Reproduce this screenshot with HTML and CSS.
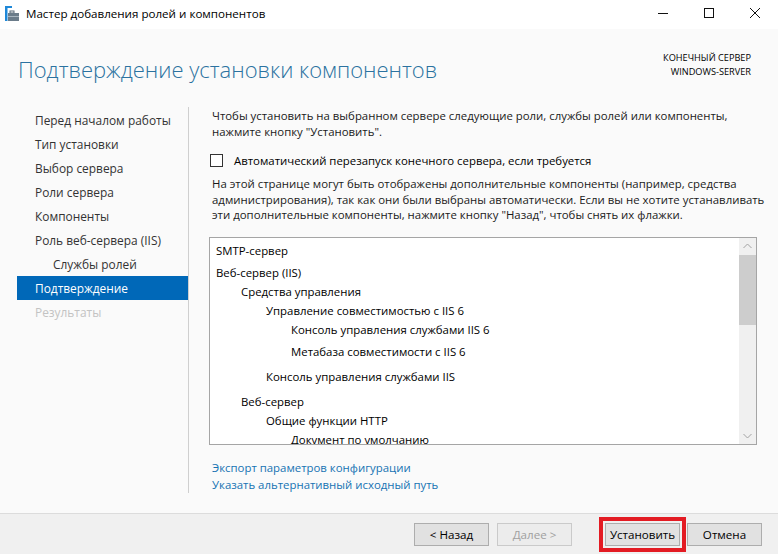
FILE: index.html
```html
<!DOCTYPE html>
<html>
<head>
    <meta charset="UTF-8">
    <title>Мастер добавления ролей и компонентов</title>
    <link rel="stylesheet" href="styles.css">
</head>
<body>
    <!-- Title bar -->
    <div class="titlebar">
        <svg class="app-icon" width="16" height="16" viewBox="0 0 16 16">
            <rect x="0" y="0" width="7" height="2" fill="#1e88d8"/>
            <rect x="0" y="0" width="2.5" height="15" fill="#1e88d8"/>
            <rect x="5" y="5" width="4" height="2" fill="none" stroke="#5a6b78" stroke-width="1"/>
            <rect x="3" y="7" width="11" height="8" fill="#6b7c8a"/>
            <rect x="3" y="10" width="11" height="1" fill="#a9b6c0"/>
        </svg>
        <span class="title-text">Мастер добавления ролей и компонентов</span>
        <div class="controls">
            <span class="ctl">
                <svg width="12" height="12" viewBox="0 0 12 12"><line x1="1" y1="6.5" x2="11" y2="6.5" stroke="#111" stroke-width="1"/></svg>
            </span>
            <span class="ctl">
                <svg width="12" height="12" viewBox="0 0 12 12"><rect x="1.5" y="1.5" width="9" height="9" fill="none" stroke="#111" stroke-width="1"/></svg>
            </span>
            <span class="ctl">
                <svg width="12" height="12" viewBox="0 0 12 12"><path d="M1 1 L11 11 M11 1 L1 11" stroke="#111" stroke-width="1"/></svg>
            </span>
        </div>
    </div>

    <div class="main">
        <div class="header">
            <h1>Подтверждение установки компонентов</h1>
            <div class="server">КОНЕЧНЫЙ СЕРВЕР<br>WINDOWS-SERVER</div>
        </div>

        <div class="wizard">
            <!-- Steps -->
            <ul class="steps">
                <li>Перед началом работы</li>
                <li>Тип установки</li>
                <li>Выбор сервера</li>
                <li>Роли сервера</li>
                <li>Компоненты</li>
                <li>Роль веб-сервера (IIS)</li>
                <li class="sub">Службы ролей</li>
                <li class="active">Подтверждение</li>
                <li class="disabled">Результаты</li>
            </ul>

            <div class="content">
                <p class="intro">Чтобы установить на выбранном сервере следующие роли, службы ролей или компоненты, нажмите кнопку "Установить".</p>

                <label class="check-row">
                    <span class="checkbox"></span>
                    Автоматический перезапуск конечного сервера, если требуется
                </label>

                <p class="note">На этой странице могут быть отображены дополнительные компоненты (например, средства администрирования), так как они были выбраны автоматически. Если вы не хотите устанавливать эти дополнительные компоненты, нажмите кнопку "Назад", чтобы снять их флажки.</p>

                <div class="listbox">
                    <div class="items">
                        <div class="item">SMTP-сервер</div>
                        <div class="item sp1">Веб-сервер (IIS)</div>
                        <div class="item lvl1">Средства управления</div>
                        <div class="item lvl2">Управление совместимостью с IIS 6</div>
                        <div class="item lvl3">Консоль управления службами IIS 6</div>
                        <div class="item lvl3 sp1">Метабаза совместимости с IIS 6</div>
                        <div class="item lvl2 sp2">Консоль управления службами IIS</div>
                        <div class="item lvl1 sp2">Веб-сервер</div>
                        <div class="item lvl2">Общие функции HTTP</div>
                        <div class="item lvl3">Документ по умолчанию</div>
                    </div>
                    <div class="scrollbar">
                        <svg class="arrow" width="17" height="17" viewBox="0 0 17 17"><path d="M4.5 10 L8.5 6 L12.5 10" fill="none" stroke="#a3a3a3" stroke-width="1"/></svg>
                        <div class="track"><div class="thumb"></div></div>
                        <svg class="arrow" width="17" height="17" viewBox="0 0 17 17"><path d="M4.5 7 L8.5 11 L12.5 7" fill="none" stroke="#a3a3a3" stroke-width="1"/></svg>
                    </div>
                </div>

                <div class="links">
                    <a href="#">Экспорт параметров конфигурации</a>
                    <a href="#">Указать альтернативный исходный путь</a>
                </div>
            </div>
        </div>
    </div>

    <div class="footer">
        <button type="button">&lt; Назад</button>
        <button type="button" class="next" disabled>Далее &gt;</button>
        <button type="button" class="install">Установить</button>
        <button type="button" class="cancel">Отмена</button>
    </div>
</body>
</html>
```

FILE: styles.css
```css
body {
    margin: 0;
    width: 778px;
    height: 554px;
    overflow: hidden;
    font-family: "Open Sans", "Noto Sans", sans-serif;
    font-size: 11.4px;
    color: #000;
    background-color: #f0f0f0;
}

.titlebar {
    height: 29px;
    background-color: #fff;
    display: flex;
    align-items: center;
}

.app-icon {
    margin-left: 5px;
    margin-top: -2px;
}

.title-text {
    margin-left: 5px;
    font-size: 11.6px;
    margin-top: -3px;
}

.controls {
    margin-left: auto;
    display: flex;
    height: 29px;
}

.ctl {
    width: 46px;
    display: flex;
    align-items: center;
    justify-content: center;
    margin-top: -4px;
}

.main {
    background-color: #fafafa;
    height: 484px;
}

.header {
    display: flex;
    justify-content: space-between;
    padding: 22px 27px 0 18px;
    height: 56px;
}

h1 {
    margin: 0;
    font-weight: 300;
    font-size: 22px;
    color: #2b72a0;
    line-height: 36px;
}

.server {
    text-align: right;
    font-size: 9.2px;
    line-height: 14px;
    padding-top: 0;
}

.wizard {
    display: flex;
}

.steps {
    list-style: none;
    margin: 0 0 0 17px;
    padding: 1px 0 0 0;
    width: 171px;
    height: 385px;
    border-right: 1px solid #cfcfcf;
    font-size: 11.9px;
    color: #333;
}

.steps li {
    height: 24px;
    line-height: 24px;
    padding-left: 18px;
}

.steps li.sub {
    padding-left: 36px;
}

.steps li.active {
    background-color: #0068b8;
    color: #fff;
}

.steps li.disabled {
    color: #c3c3c3;
}

.content {
    flex: 1;
    padding: 1px 21px 0 20px;
}

p {
    margin: 0 -10px 0 0;
    padding-left: 3px;
    line-height: 15.5px;
    color: #1a1a1a;
}

.check-row {
    display: flex;
    align-items: center;
    height: 16px;
    margin-top: 13px;
    padding-left: 1px;
}

.checkbox {
    width: 11px;
    height: 11px;
    border: 1px solid #333;
    background-color: #fff;
    margin-right: 11px;
}

.note {
    margin-top: 8px;
}

.listbox {
    margin-top: 14px;
    height: 206px;
    border: 1px solid #a5a5a5;
    background-color: #fff;
    display: flex;
    overflow: hidden;
}

.items {
    flex: 1;
    padding: 3px 0 0 6px;
}

.item {
    line-height: 19px;
    white-space: nowrap;
}

.item.lvl1 { padding-left: 25px; }
.item.lvl2 { padding-left: 50px; }
.item.lvl3 { padding-left: 75px; }
.item.sp1 { margin-top: 3px; }
.item.sp2 { margin-top: 6px; }

.scrollbar {
    width: 17px;
    background-color: #f0f0f0;
    display: flex;
    flex-direction: column;
}

.arrow {
    display: block;
}

.track {
    flex: 1;
}

.thumb {
    height: 70px;
    background-color: #cdcdcd;
}

.links {
    margin-top: 14px;
    padding-left: 3px;
    display: flex;
    flex-direction: column;
}

.links a {
    color: #1673b3;
    text-decoration: none;
    line-height: 17px;
}

.footer {
    border-top: 1px solid #dcdcdc;
    height: 40px;
    display: flex;
    justify-content: flex-end;
    align-items: flex-start;
    padding: 9px 16px 0 0;
    box-sizing: border-box;
}

button {
    width: 75px;
    height: 23px;
    font-family: inherit;
    font-size: 11.6px;
    background-color: #e1e1e1;
    border: 1px solid #adadad;
    color: #000;
    padding: 0;
}

button.next {
    margin-left: 8px;
    color: #a0a0a0;
    border-color: #cacaca;
    background-color: #ececec;
}

button.install {
    margin-left: 33px;
    outline: 4px solid #e31b23;
    outline-offset: 2px;
}

button.cancel {
    margin-left: 7px;
}
```
